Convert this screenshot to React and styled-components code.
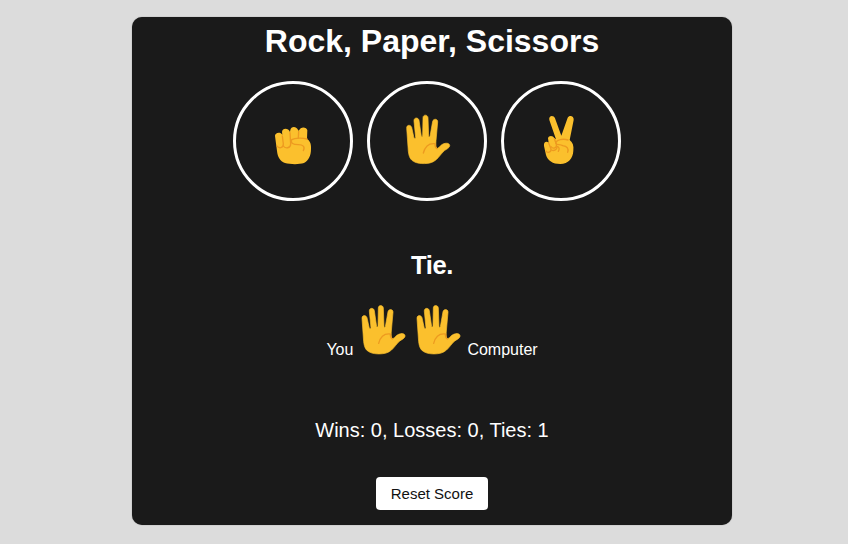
import React, { useState } from "react";
import styled, { createGlobalStyle } from "styled-components";

const GlobalStyle = createGlobalStyle`
  * { box-sizing: border-box; }
  body {
    margin: 0;
    min-height: 544px;
    background: #dcdcdc;
    font-family: "Liberation Sans", Arial, sans-serif;
    overflow: hidden;
  }
`;

const Page = styled.main`
  display: flex;
  justify-content: center;
  padding: 17px 0 0 16px;
`;

const Card = styled.section`
  display: flex;
  flex-direction: column;
  align-items: center;
  width: 600px;
  height: 508px;
  border-radius: 10px;
  background: #1a1a1a;
  color: #fff;
  box-shadow: 0 0 1px rgba(0, 0, 0, 0.5);
`;

const Title = styled.h1`
  margin: 6px 0 0;
  height: 37px;
  font-size: 32px;
  line-height: 37px;
`;

const Moves = styled.div`
  display: flex;
  gap: 14px;
  margin: 21px 10px 0 0;
`;

const MoveButton = styled.button`
  display: flex;
  align-items: center;
  justify-content: center;
  width: 120px;
  height: 120px;
  padding: 0;
  border: 3px solid #fff;
  border-radius: 50%;
  background: transparent;
  cursor: pointer;
`;

const Icon = styled.svg`
  display: block;
  flex: none;
  width: ${(p) => p.$w}px;
  height: ${(p) => p.$h}px;
  stroke-linecap: round;
  stroke-linejoin: round;
`;

const Result = styled.p`
  margin: 49px 0 0;
  height: 30px;
  font-size: 25.6px;
  line-height: 30px;
  letter-spacing: -0.4px;
  font-weight: bold;
`;

const Picks = styled.div`
  display: flex;
  align-items: flex-end;
  height: 50px;
  margin-top: 25px;
  font-size: 16px;
  line-height: 18px;
`;

const Player = styled.span`
  margin-bottom: -4px;
  padding-right: ${(p) => p.$gap || 0}px;
`;

const Score = styled.p`
  margin: 63px 0 0;
  font-size: 20px;
  line-height: 24px;
`;

const ResetButton = styled.button`
  width: 112px;
  height: 33px;
  margin-top: 35px;
  padding: 0;
  border: 0;
  border-radius: 4px;
  background: #fff;
  color: #111;
  font-family: inherit;
  font-size: 15px;
  cursor: pointer;
`;

const SKIN = "#fbc02d";
const LINE = "#ed9a20";

function Fist() {
  return (
    <Icon $w={60} $h={60} viewBox="-3 -15 180 180">
      <path
        fill={SKIN}
        d="M33 60 C32 49 50 46 55 56 L54 48 C55 35 73 35 78 48 L79 42 C81 29 99 30 103 44 L106 42 C109 31 129 32 130 43 L129 69 C139 75 142 86 141 99 C141 119 134 134 120 141 C104 146 78 145 63 141 C48 135 41 124 39 105 Z"
      />
      <g fill="none" stroke={LINE} strokeWidth="4">
        <path d="M55 60 L58 84 C58 97 44 98 39 90" />
        <path d="M78 50 L80 84 C80 98 63 98 58 90" />
        <path d="M104 46 L103 66" />
        <path d="M129 69 C116 65 94 65 83 71 C79 82 87 86 103 86 C117 86 124 92 118 104" />
      </g>
    </Icon>
  );
}

function Palm({ w, h, viewBox }) {
  return (
    <Icon $w={w} $h={h} viewBox={viewBox}>
      <path
        fill={SKIN}
        stroke={SKIN}
        strokeWidth="2"
        d="M26 60 C25 50 38 49 41 58 L48 90 Q51 93 53 89 L48 39 C47 28 61 27 63 37 L70 85 Q72 87 74 84 L75 29 C75 19 89 19 90 29 L92 85 Q94 88 96 85 L104 40 C106 31 120 32 119 42 L114 98 C113 113 114 121 119 121 C125 118 129 108 142 106 C154 104 158 112 153 118 C148 124 141 125 135 132 C123 145 119 154 106 161 C94 168 65 169 50 162 C37 156 33 147 31 130 Z"
      />
      <path
        d="M76 135 C81 116 94 105 111 107 C111 114 113 120 117 122"
        fill="none"
        stroke={LINE}
        strokeWidth="4"
      />
    </Icon>
  );
}

function Peace() {
  return (
    <Icon $w={60} $h={60} viewBox="-9 9 180 180">
      <path
        fill={SKIN}
        d="M46 36 C43 22 59 20 63 31 L82 83 L101 29 C106 19 121 24 119 36 L107 96 C116 103 120 113 118 128 C117 151 103 167 79 168 C56 168 41 158 36 141 L30 114 C28 103 37 98 44 104 L42 91 C44 82 57 82 61 91 L66 94 Z"
      />
      <g fill="none" stroke={LINE} strokeWidth="4">
        <path d="M44 105 L51 123 C52 133 40 136 36 129" />
        <path d="M61 92 L67 108 C70 120 57 124 51 116" />
        <path d="M102 96 C88 91 67 95 65 105 C66 112 78 108 86 113 C99 115 105 121 101 133" />
        <path d="M52 126 C60 130 70 125 69 115 C76 116 77 124 73 130" />
      </g>
    </Icon>
  );
}

function ResultPalm() {
  return <Palm w={55} h={50} viewBox="11 20 165 150" />;
}

export default function App() {
  const [ties, setTies] = useState(1);
  return (
    <>
      <GlobalStyle />
      <Page>
        <Card>
          <Title>Rock, Paper, Scissors</Title>
          <Moves>
            <MoveButton aria-label="Rock"><Fist /></MoveButton>
            <MoveButton aria-label="Paper">
              <Palm w={60} h={60} viewBox="-3 9 180 180" />
            </MoveButton>
            <MoveButton aria-label="Scissors"><Peace /></MoveButton>
          </Moves>
          <Result>Tie.</Result>
          <Picks>
            <Player $gap={4}>You</Player>
            <ResultPalm />
            <ResultPalm />
            <Player>Computer</Player>
          </Picks>
          <Score>Wins: 0, Losses: 0, Ties: {ties}</Score>
          <ResetButton onClick={() => setTies(0)}>Reset Score</ResetButton>
        </Card>
      </Page>
    </>
  );
}
